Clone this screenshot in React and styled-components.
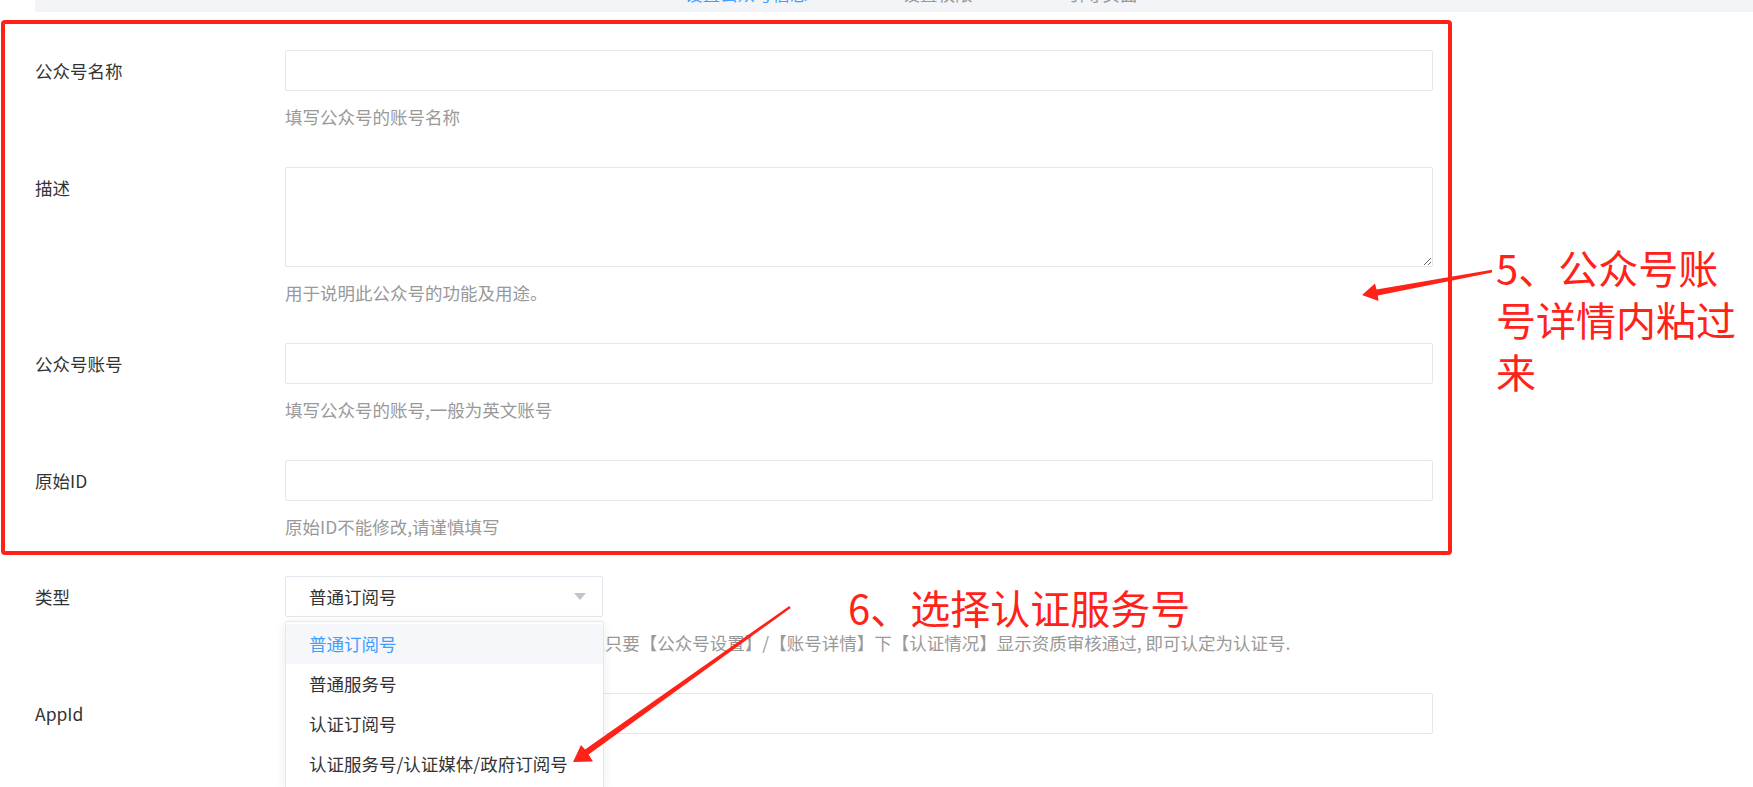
import styled, { createGlobalStyle } from "styled-components";

const GlobalStyle = createGlobalStyle`
  body {
    margin: 0;
    background: #fff;
    font-family: "Noto Sans CJK SC", "Noto Sans", sans-serif;
  }
`;

const Page = styled.div`
  position: relative;
  width: 1753px;
  height: 787px;
  overflow: hidden;
`;

const StepBar = styled.div`
  display: flex;
  gap: 95px;
  height: 12px;
  margin-left: 35px;
  padding-left: 650px;
  background: #f3f4f8;
  overflow: hidden;
`;

const Step = styled.span`
  margin-top: -15px;
  font-size: 17.5px;
  line-height: 17.5px;
  white-space: nowrap;
  color: ${(p) => (p.$active ? "#409eff" : "#999")};
`;

const Form = styled.div`
  padding-left: 35px;
`;

const Highlight = styled.div`
  box-sizing: border-box;
  width: 1451px;
  margin: 8px 0 21px -34px;
  padding: 26px 0 11px 30px;
  border: 4px solid #ff2219;
  border-radius: 4px;
`;

const Row = styled.div`
  display: flex;
  margin-bottom: 37px;
  &:last-child {
    margin-bottom: 0;
  }
`;

const Label = styled.div`
  flex-shrink: 0;
  width: 250px;
  font-size: 17.5px;
  line-height: 41px;
  color: #333;
`;

const Field = styled.div`
  position: relative;
  width: ${(p) => p.$w || 1148}px;
`;

const TextInput = styled.input`
  display: block;
  box-sizing: border-box;
  width: 100%;
  height: 41px;
  border: 1px solid #e4e7ed;
  border-radius: 2px;
  outline: none;
  background: #fff;
`;

const TextArea = styled.textarea`
  display: block;
  box-sizing: border-box;
  width: 100%;
  height: 100px;
  margin: 0;
  border: 1px solid #e4e7ed;
  border-radius: 2px;
  outline: none;
  resize: vertical;
`;

const Hint = styled.div`
  margin-top: 13px;
  font-size: 17.5px;
  line-height: 26px;
  color: #999;
  white-space: nowrap;
`;

const SelectBox = styled.div`
  display: flex;
  align-items: center;
  justify-content: space-between;
  box-sizing: border-box;
  height: 41px;
  padding: 0 16px 0 23px;
  border: 1px solid #e4e7ed;
  border-radius: 2px;
  font-size: 17.5px;
  color: #333;
`;

const Menu = styled.ul`
  position: absolute;
  top: 45px;
  left: 0;
  z-index: 5;
  box-sizing: border-box;
  width: 319px;
  margin: 0;
  padding: 2px 0 4px;
  list-style: none;
  background: #fff;
  border: 1px solid #e4e7ed;
  border-radius: 2px;
  box-shadow: 0 2px 12px rgba(0, 0, 0, 0.08);
`;

const MenuItem = styled.li`
  height: 40px;
  padding: 0 23px;
  font-size: 17.5px;
  line-height: 40px;
  white-space: nowrap;
  color: ${(p) => (p.$active ? "#409eff" : "#333")};
  background: ${(p) => (p.$active ? "#f5f7fa" : "transparent")};
`;

const Note = styled.div`
  position: absolute;
  left: ${(p) => p.$x}px;
  top: ${(p) => p.$y}px;
  width: ${(p) => p.$w}px;
  z-index: 10;
  font-size: 40px;
  line-height: 52px;
  color: #ff2219;
`;

const Arrows = styled.svg`
  position: absolute;
  inset: 0;
  z-index: 11;
  pointer-events: none;
`;

const Caret = () => (
  <svg width="12" height="7" viewBox="0 0 12 7">
    <path d="M0 0 L12 0 L6 7 Z" fill="#c0c4cc" />
  </svg>
);

const InputRow = ({ label, hint }) => (
  <Row>
    <Label>{label}</Label>
    <Field>
      <TextInput />
      <Hint>{hint}</Hint>
    </Field>
  </Row>
);

const types = ["普通订阅号", "普通服务号", "认证订阅号", "认证服务号/认证媒体/政府订阅号"];

export default function App() {
  return (
    <Page>
      <GlobalStyle />
      <StepBar>
        <Step $active>设置公众号信息</Step>
        <Step>设置权限</Step>
        <Step>引导页面</Step>
      </StepBar>
      <Form>
        <Highlight>
          <InputRow label="公众号名称" hint="填写公众号的账号名称" />
          <Row>
            <Label>描述</Label>
            <Field>
              <TextArea />
              <Hint>用于说明此公众号的功能及用途。</Hint>
            </Field>
          </Row>
          <InputRow label="公众号账号" hint="填写公众号的账号,一般为英文账号" />
          <InputRow label="原始ID" hint="原始ID不能修改,请谨慎填写" />
        </Highlight>
        <Row>
          <Label>类型</Label>
          <Field $w={318}>
            <SelectBox>
              普通订阅号
              <Caret />
            </SelectBox>
            <Menu>
              {types.map((t, i) => (
                <MenuItem key={t} $active={i === 0}>
                  {t}
                </MenuItem>
              ))}
            </Menu>
            <Hint>
              注意：公众号的认证状态以微信后台为准,只要【公众号设置】/【账号详情】下【认证情况】显示资质审核通过, 即可认定为认证号.
            </Hint>
          </Field>
        </Row>
        <InputRow label="AppId" hint="请填写公众号的AppId" />
      </Form>
      <Note $x={1496} $y={241} $w={250}>
        5、公众号账号详情内粘过来
      </Note>
      <Note $x={848} $y={581} $w={400}>
        6、选择认证服务号
      </Note>
      <Arrows width="1753" height="787" viewBox="0 0 1753 787">
        <path
          d="M1362 295 L1375 283.5 L1376.5 289.5 L1492 269.8 L1492 272.6 L1377.8 295.6 L1378.5 301 Z"
          fill="#ff2219"
        />
        <path
          d="M573 762 L581 745 L585 749.5 L789.3 606 L790.7 608 L588.6 754.6 L593 761.5 Z"
          fill="#ff2219"
        />
      </Arrows>
    </Page>
  );
}
